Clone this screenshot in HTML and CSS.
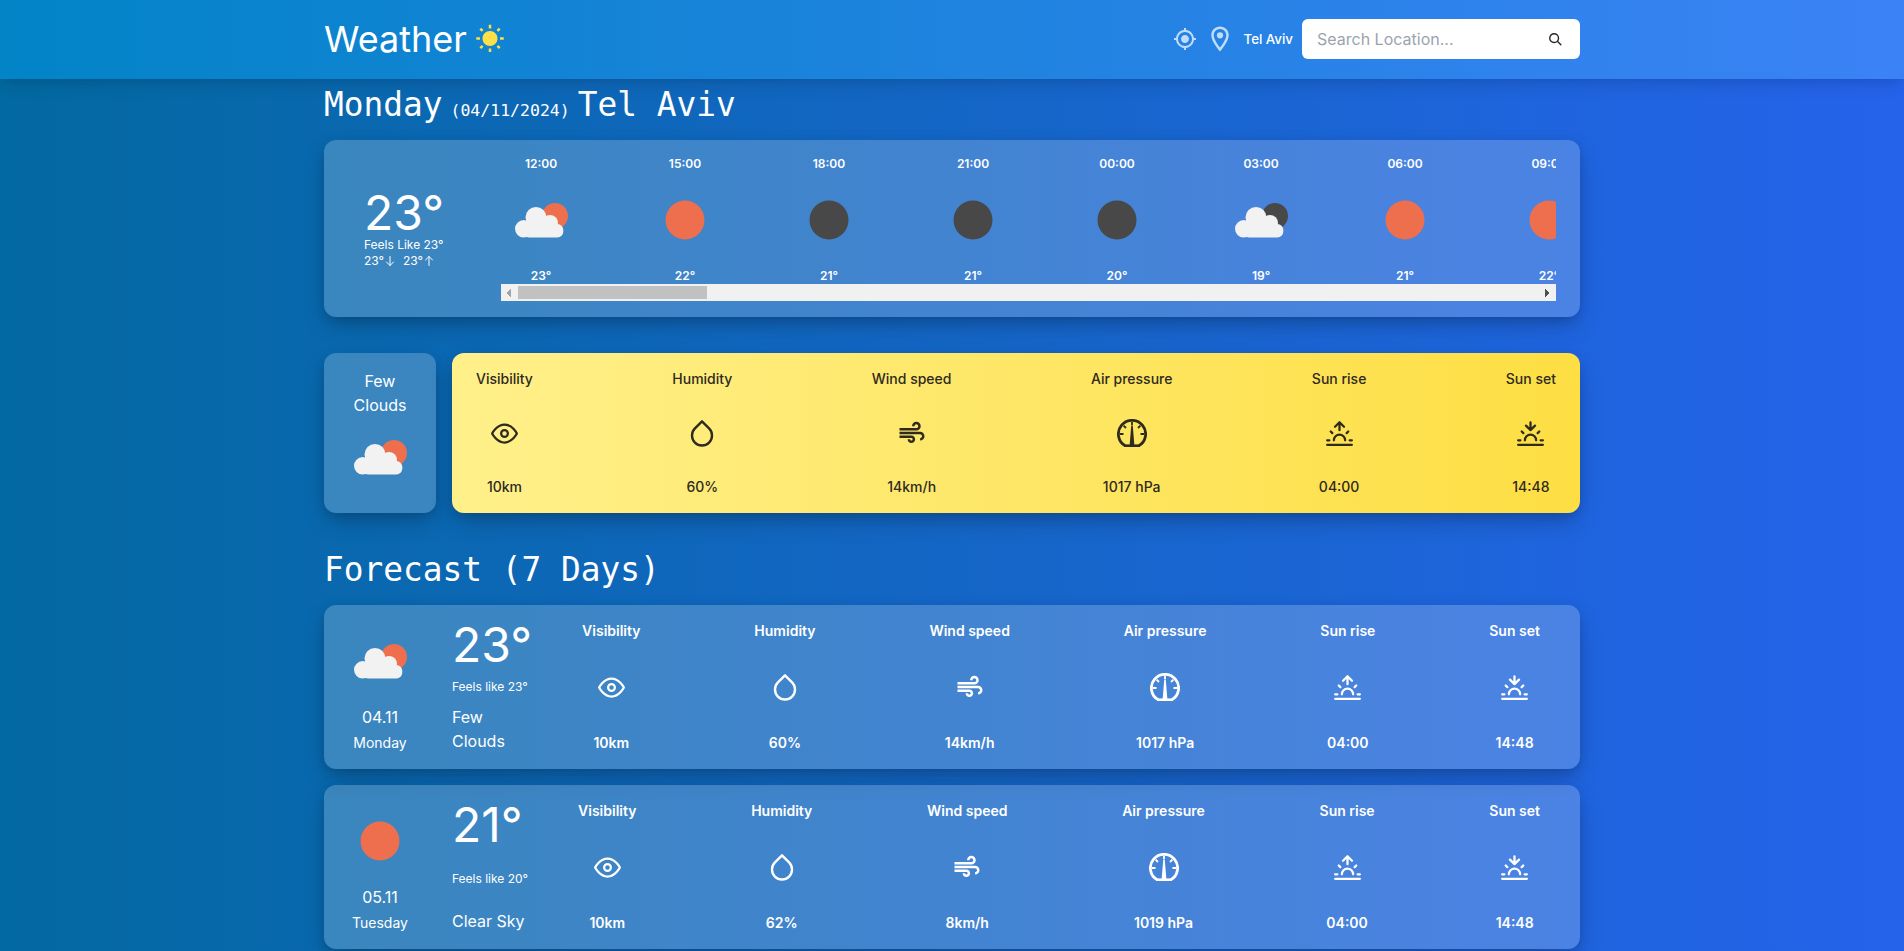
FILE: index.html
```html
<!DOCTYPE html>
<html lang="en">
<head>
    <meta charset="UTF-8">
    <meta name="viewport" content="width=device-width, initial-scale=1.0">
    <title>Weather</title>
    <link rel="stylesheet" href="styles.css">
</head>
<body>
    <!-- icons -->
    <svg class="sprite" aria-hidden="true">
        <symbol id="i-sun" viewBox="0 0 24 24"><path d="M6.76 4.84l-1.8-1.79-1.41 1.41 1.79 1.79 1.42-1.41zM4 10.5H1v2h3v-2zm9-9.95h-2V3.5h2V.55zm7.45 3.91l-1.41-1.41-1.79 1.79 1.41 1.41 1.79-1.79zm-3.21 13.7l1.79 1.8 1.41-1.41-1.8-1.79-1.4 1.4zM20 10.5v2h3v-2h-3zm-8-5c-3.31 0-6 2.69-6 6s2.69 6 6 6 6-2.69 6-6-2.69-6-6-6zm-1 16.95h2V19.5h-2v2.95zm-7.45-3.91l1.41 1.41 1.79-1.8-1.41-1.41-1.79 1.8z" fill="currentColor"/></symbol>
        <symbol id="i-target" viewBox="0 0 24 24"><path d="M12 8c-2.21 0-4 1.79-4 4s1.79 4 4 4 4-1.79 4-4-1.79-4-4-4zm8.94 3c-.46-4.17-3.77-7.48-7.94-7.94V1h-2v2.06C6.83 3.52 3.52 6.83 3.06 11H1v2h2.06c.46 4.17 3.77 7.48 7.94 7.94V23h2v-2.06c4.17-.46 7.48-3.77 7.94-7.94H23v-2h-2.06zM12 19c-3.87 0-7-3.13-7-7s3.13-7 7-7 7 3.13 7 7-3.13 7-7 7z" fill="currentColor"/></symbol>
        <symbol id="i-pin" viewBox="0 0 24 24"><path d="M12 2C8.13 2 5 5.13 5 9c0 5.25 7 13 7 13s7-7.75 7-13c0-3.87-3.13-7-7-7zM7 9c0-2.76 2.24-5 5-5s5 2.24 5 5c0 2.88-2.88 7.19-5 9.88C9.92 16.21 7 11.85 7 9z" fill="currentColor"/><circle cx="12" cy="9" r="2.5" fill="currentColor"/></symbol>
        <symbol id="i-search" viewBox="0 0 24 24"><g fill="none" stroke="currentColor" stroke-width="2.4" stroke-linecap="round"><circle cx="10.5" cy="10.5" r="7.5"/><path d="M16 16l6 6"/></g></symbol>
        <symbol id="i-down" viewBox="0 0 24 24"><path d="M12 3v18M5 14l7 7 7-7" fill="none" stroke="currentColor" stroke-width="2" stroke-linecap="round" stroke-linejoin="round"/></symbol>
        <symbol id="i-up" viewBox="0 0 24 24"><path d="M12 21V3M5 10l7-7 7 7" fill="none" stroke="currentColor" stroke-width="2" stroke-linecap="round" stroke-linejoin="round"/></symbol>
        <symbol id="i-eye" viewBox="0 0 24 24"><g fill="none" stroke="currentColor" stroke-width="2" stroke-linecap="round" stroke-linejoin="round"><path d="M1 12s4-8 11-8 11 8 11 8-4 8-11 8-11-8-11-8z"/><circle cx="12" cy="12" r="3"/></g></symbol>
        <symbol id="i-drop" viewBox="0 0 24 24"><path d="M12 2.69l5.66 5.66a8 8 0 1 1-11.31 0z" fill="none" stroke="currentColor" stroke-width="1.9" stroke-linecap="round" stroke-linejoin="round"/></symbol>
        <symbol id="i-wind" viewBox="0 0 24 24"><path d="M14.5 17c0 1.65-1.35 3-3 3s-3-1.35-3-3h2c0 .55.45 1 1 1s1-.45 1-1-.45-1-1-1H2v-2h9.5c1.65 0 3 1.35 3 3zM19 6.5C19 4.57 17.43 3 15.5 3S12 4.57 12 6.5h2c0-.83.67-1.5 1.5-1.5s1.5.67 1.5 1.5S16.33 8 15.5 8H2v2h13.5c1.93 0 3.5-1.57 3.5-3.5zm-.5 4.5H2v2h16.5c.83 0 1.5.67 1.5 1.5s-.67 1.5-1.5 1.5v2c1.93 0 3.5-1.57 3.5-3.5S20.43 11 18.5 11z" fill="currentColor"/></symbol>
        <symbol id="i-gauge" viewBox="0 0 30 28"><g fill="none" stroke="currentColor"><path d="M8 26.6A13.6 13.6 0 1 1 22 26.6" stroke-width="2.8"/><path d="M15 3v3.5M3 15h3.5M23.5 15H27M6.6 6.6l2.4 2.4M23.4 6.6L21 9" stroke-width="1.8"/></g><path d="M14.2 7h1.6L17.5 28h-5z" fill="currentColor"/><path d="M7 25.4h16V28H7z" fill="currentColor"/></symbol>
        <symbol id="i-sunrise" viewBox="0 0 24 24"><path d="M17 18a5 5 0 0 0-10 0M12 2v7M4.22 10.22l1.42 1.42M1 18h2M21 18h2M18.36 11.64l1.42-1.42M23 22H1M8 6l4-4 4 4" fill="none" stroke="currentColor" stroke-width="2" stroke-linecap="round" stroke-linejoin="round"/></symbol>
        <symbol id="i-sunset" viewBox="0 0 24 24"><path d="M17 18a5 5 0 0 0-10 0M12 9V2M4.22 10.22l1.42 1.42M1 18h2M21 18h2M18.36 11.64l1.42-1.42M23 22H1M16 5l-4 4-4-4" fill="none" stroke="currentColor" stroke-width="2" stroke-linecap="round" stroke-linejoin="round"/></symbol>
        <symbol id="w-sun" viewBox="0 0 80 80"><circle cx="40" cy="40" r="19.5" fill="#ed6f4e"/></symbol>
        <symbol id="w-moon" viewBox="0 0 80 80"><circle cx="40" cy="40" r="19.5" fill="#484848"/></symbol>
        <symbol id="w-cloud" viewBox="0 0 80 80"><g fill="#f2f2f2"><circle cx="22.7" cy="48.8" r="8.7"/><rect x="22" y="44" width="40.3" height="13.5" rx="6"/><circle cx="35" cy="37.5" r="10.5"/><circle cx="49" cy="43" r="8"/></g></symbol>
        <symbol id="w-few-d" viewBox="0 0 80 80"><circle cx="54" cy="36" r="13" fill="#ed6f4e"/><use href="#w-cloud"/></symbol>
        <symbol id="w-few-n" viewBox="0 0 80 80"><circle cx="54" cy="36" r="13" fill="#484848"/><use href="#w-cloud"/></symbol>
    </svg>

    <header class="topbar">
        <div class="wrap topbar-inner">
            <div class="logo">
                <span>Weather</span>
                <svg class="logo-sun"><use href="#i-sun"/></svg>
            </div>
            <div class="topbar-right">
                <svg class="ic-target"><use href="#i-target"/></svg>
                <svg class="ic-pin"><use href="#i-pin"/></svg>
                <span class="city">Tel Aviv</span>
                <div class="search">
                    <input type="text" placeholder="Search Location...">
                    <svg class="ic-search"><use href="#i-search"/></svg>
                </div>
            </div>
        </div>
    </header>

    <main class="wrap content">
        <section>
            <h2 class="heading">
                <span>Monday</span>
                <span class="heading-date">(04/11/2024)</span>
                <span>Tel Aviv</span>
            </h2>
            <div class="card today">
                <div class="today-temp">
                    <div>
                        <div class="temp">23°</div>
                        <div class="small">Feels Like 23°</div>
                        <div class="small minmax">
                            <span>23°<svg class="ic-arrow"><use href="#i-down"/></svg></span>
                            <span>23°<svg class="ic-arrow"><use href="#i-up"/></svg></span>
                        </div>
                    </div>
                </div>
                <div class="hours-box">
                    <div class="hours">
                        <div class="hour"><span>12:00</span><svg class="w-icon"><use href="#w-few-d"/></svg><span>23°</span></div>
                        <div class="hour"><span>15:00</span><svg class="w-icon"><use href="#w-sun"/></svg><span>22°</span></div>
                        <div class="hour"><span>18:00</span><svg class="w-icon"><use href="#w-moon"/></svg><span>21°</span></div>
                        <div class="hour"><span>21:00</span><svg class="w-icon"><use href="#w-moon"/></svg><span>21°</span></div>
                        <div class="hour"><span>00:00</span><svg class="w-icon"><use href="#w-moon"/></svg><span>20°</span></div>
                        <div class="hour"><span>03:00</span><svg class="w-icon"><use href="#w-few-n"/></svg><span>19°</span></div>
                        <div class="hour"><span>06:00</span><svg class="w-icon"><use href="#w-sun"/></svg><span>21°</span></div>
                        <div class="hour"><span>09:00</span><svg class="w-icon"><use href="#w-sun"/></svg><span>22°</span></div>
                    </div>
                    <div class="scrollbar">
                        <div class="sb-btn sb-left"></div>
                        <div class="sb-thumb"></div>
                        <div class="sb-btn sb-right"></div>
                    </div>
                </div>
            </div>
        </section>

        <section class="today-row">
            <div class="card cond">
                <p>Few Clouds</p>
                <svg class="w-icon"><use href="#w-few-d"/></svg>
            </div>
            <div class="card yellow stats">
                <div class="stat"><span>Visibility</span><svg class="ic-eye"><use href="#i-eye"/></svg><span>10km</span></div>
                <div class="stat"><span>Humidity</span><svg class="ic-drop"><use href="#i-drop"/></svg><span>60%</span></div>
                <div class="stat"><span>Wind speed</span><svg class="ic-wind"><use href="#i-wind"/></svg><span>14km/h</span></div>
                <div class="stat"><span>Air pressure</span><svg class="ic-gauge"><use href="#i-gauge"/></svg><span>1017 hPa</span></div>
                <div class="stat"><span>Sun rise</span><svg class="ic-sunrise"><use href="#i-sunrise"/></svg><span>04:00</span></div>
                <div class="stat"><span>Sun set</span><svg class="ic-sunrise"><use href="#i-sunset"/></svg><span>14:48</span></div>
            </div>
        </section>

        <section>
            <h2 class="heading">Forecast (7 Days)</h2>
            <div class="days">
                <div class="card day">
                    <div class="day-when">
                        <svg class="w-icon"><use href="#w-few-d"/></svg>
                        <p>04.11</p>
                        <span>Monday</span>
                    </div>
                    <div class="day-temp">
                        <div class="temp">23°</div>
                        <div class="small">Feels like 23°</div>
                        <p>Few Clouds</p>
                    </div>
                    <div class="stats day-stats">
                        <div class="stat"><span>Visibility</span><svg class="ic-eye"><use href="#i-eye"/></svg><span>10km</span></div>
                        <div class="stat"><span>Humidity</span><svg class="ic-drop"><use href="#i-drop"/></svg><span>60%</span></div>
                        <div class="stat"><span>Wind speed</span><svg class="ic-wind"><use href="#i-wind"/></svg><span>14km/h</span></div>
                        <div class="stat"><span>Air pressure</span><svg class="ic-gauge"><use href="#i-gauge"/></svg><span>1017 hPa</span></div>
                        <div class="stat"><span>Sun rise</span><svg class="ic-sunrise"><use href="#i-sunrise"/></svg><span>04:00</span></div>
                        <div class="stat"><span>Sun set</span><svg class="ic-sunrise"><use href="#i-sunset"/></svg><span>14:48</span></div>
                    </div>
                </div>
                <div class="card day">
                    <div class="day-when">
                        <svg class="w-icon"><use href="#w-sun"/></svg>
                        <p>05.11</p>
                        <span>Tuesday</span>
                    </div>
                    <div class="day-temp">
                        <div class="temp">21°</div>
                        <div class="small">Feels like 20°</div>
                        <p>Clear Sky</p>
                    </div>
                    <div class="stats day-stats">
                        <div class="stat"><span>Visibility</span><svg class="ic-eye"><use href="#i-eye"/></svg><span>10km</span></div>
                        <div class="stat"><span>Humidity</span><svg class="ic-drop"><use href="#i-drop"/></svg><span>62%</span></div>
                        <div class="stat"><span>Wind speed</span><svg class="ic-wind"><use href="#i-wind"/></svg><span>8km/h</span></div>
                        <div class="stat"><span>Air pressure</span><svg class="ic-gauge"><use href="#i-gauge"/></svg><span>1019 hPa</span></div>
                        <div class="stat"><span>Sun rise</span><svg class="ic-sunrise"><use href="#i-sunrise"/></svg><span>04:00</span></div>
                        <div class="stat"><span>Sun set</span><svg class="ic-sunrise"><use href="#i-sunset"/></svg><span>14:48</span></div>
                    </div>
                </div>
            </div>
        </section>
    </main>
</body>
</html>
```

FILE: styles.css
```css
* {
    box-sizing: border-box;
}
html, body {
    margin: 0;
    height: 100%;
}
body {
    font-family: Inter, "Liberation Sans", sans-serif;
    color: #fff;
    background: linear-gradient(to right, #0369a1, #2563eb);
    overflow: hidden;
}
p {
    margin: 0;
}
.sprite {
    display: none;
}
.wrap {
    max-width: 1280px;
    margin: 0 auto;
    padding-left: 12px;
    padding-right: 12px;
}

/* top bar */
.topbar {
    position: relative;
    z-index: 1;
    height: 79px;
    background: linear-gradient(to right, #0284c7, #3b82f6);
    box-shadow: 0 10px 15px -3px rgba(0, 0, 0, .1), 0 4px 6px -4px rgba(0, 0, 0, .1);
}
.topbar-inner {
    height: 100%;
    padding-bottom: 1px;
    display: flex;
    align-items: center;
    justify-content: space-between;
}
.logo {
    display: flex;
    align-items: center;
    gap: 8px;
    font-size: 36px;
}
.logo-sun {
    width: 30px;
    height: 30px;
    color: #fde047;
}
.topbar-right {
    display: flex;
    align-items: center;
    gap: 8px;
}
.ic-target {
    width: 24px;
    height: 24px;
    color: #bfdcfb;
}
.ic-pin {
    width: 30px;
    height: 30px;
    color: #bfdcfb;
}
.city {
    font-size: 13.3px;
    font-weight: 500;
    margin-right: 1px;
}
.search {
    width: 278px;
    height: 40px;
    display: flex;
    align-items: center;
    padding: 0 18px 0 15px;
    background: #fff;
    border-radius: 6px;
}
.search input {
    flex: 1;
    min-width: 0;
    border: 0;
    outline: 0;
    padding: 0;
    font: inherit;
    font-size: 16px;
}
.search input::placeholder {
    color: #9ca3af;
}
.ic-search {
    width: 14px;
    height: 14px;
    color: #27272a;
}

/* page */
.content {
    padding-top: 5px;
    display: flex;
    flex-direction: column;
    gap: 36px;
}
.heading {
    display: flex;
    align-items: baseline;
    gap: 8px;
    height: 40px;
    margin: 0 0 16px;
    padding-top: 2px;
    font-family: "DejaVu Sans Mono", monospace;
    font-size: 32.8px;
    font-weight: 400;
    line-height: 38px;
    white-space: pre;
}
.heading-date {
    font-size: 16.5px;
    line-height: 1;
}
.card {
    background: rgba(255, 255, 255, .2);
    border-radius: 12px;
    box-shadow: 0 10px 25px -3px rgba(0, 0, 0, .22), 0 4px 12px -2px rgba(0, 0, 0, .15);
}
.yellow {
    color: #2e2a1e;
    background: linear-gradient(to right, #fff08a, #fdde43);
}
.temp {
    font-size: 48px;
    line-height: 48px;
    font-weight: 400;
}
.small {
    font-size: 12px;
    line-height: 16px;
}
.w-icon {
    width: 80px;
    height: 80px;
    flex: none;
}

/* today card */
.today {
    display: flex;
    gap: 33px;
    padding: 16px 24px 16px 16px;
}
.today-temp {
    width: 128px;
    flex: none;
    display: flex;
    align-items: center;
    justify-content: center;
}
.minmax {
    display: flex;
    gap: 7px;
}
.minmax span {
    display: flex;
    align-items: center;
}
.ic-arrow {
    width: 12px;
    height: 12px;
}
.hours-box {
    flex: 1;
    min-width: 0;
    overflow: hidden;
}
.hours {
    height: 128px;
    display: flex;
    gap: 64px;
}
.hour {
    width: 80px;
    flex: none;
    display: flex;
    flex-direction: column;
    align-items: center;
    justify-content: space-between;
    font-size: 12px;
    line-height: 16px;
    font-weight: 600;
    white-space: nowrap;
}
/* same look as the desktop browser bar */
.scrollbar {
    height: 17px;
    display: flex;
    background: #f1f1f1;
}
.sb-btn {
    width: 17px;
    flex: none;
    background-repeat: no-repeat;
    background-size: 4px 8px;
    background-position: 6px 50%;
}
.sb-left {
    background-image: conic-gradient(from 45deg at 0 50%, #a3a3a3 90deg, transparent 0);
}
.sb-right {
    margin-left: auto;
    background-image: conic-gradient(from 225deg at 100% 50%, #505050 90deg, transparent 0);
}
.sb-thumb {
    width: 189px;
    margin: 2px 0;
    background: #c1c1c1;
}

/* condition + details row */
.today-row {
    display: flex;
    gap: 16px;
}
.cond {
    width: 112px;
    flex: none;
    padding: 16px;
    display: flex;
    flex-direction: column;
    align-items: center;
    text-align: center;
    font-size: 16px;
    line-height: 24px;
}
.stats {
    flex: 1;
    min-width: 0;
    display: flex;
    justify-content: space-between;
    padding: 16px 24px;
    font-size: 14px;
    line-height: 20px;
    font-weight: 500;
}
.stat {
    display: flex;
    flex-direction: column;
    align-items: center;
    justify-content: space-between;
    white-space: nowrap;
}
.ic-eye {
    width: 27px;
    height: 27px;
}
.ic-drop {
    width: 30px;
    height: 30px;
}
.ic-wind {
    width: 30px;
    height: 30px;
}
.ic-gauge {
    width: 30px;
    height: 28px;
}
.ic-sunrise {
    width: 27px;
    height: 27px;
}

/* forecast */
.days {
    display: flex;
    flex-direction: column;
    gap: 16px;
}
.day {
    display: flex;
    height: 164px;
    padding: 16px 40px 16px 16px;
    gap: 32px;
}
.day-when {
    width: 80px;
    flex: none;
    display: flex;
    flex-direction: column;
    align-items: center;
    gap: 4px;
}
.day-when p {
    font-size: 16px;
    line-height: 24px;
}
.day-when span {
    font-size: 14px;
    line-height: 20px;
}
.day-temp {
    flex: none;
    display: flex;
    flex-direction: column;
    justify-content: space-between;
    white-space: nowrap;
}
.day-temp p {
    font-size: 16px;
    line-height: 24px;
    white-space: normal;
    max-width: 76px;
}
.day-stats {
    padding: 0 0 0 18px;
    font-weight: 600;
}
```
